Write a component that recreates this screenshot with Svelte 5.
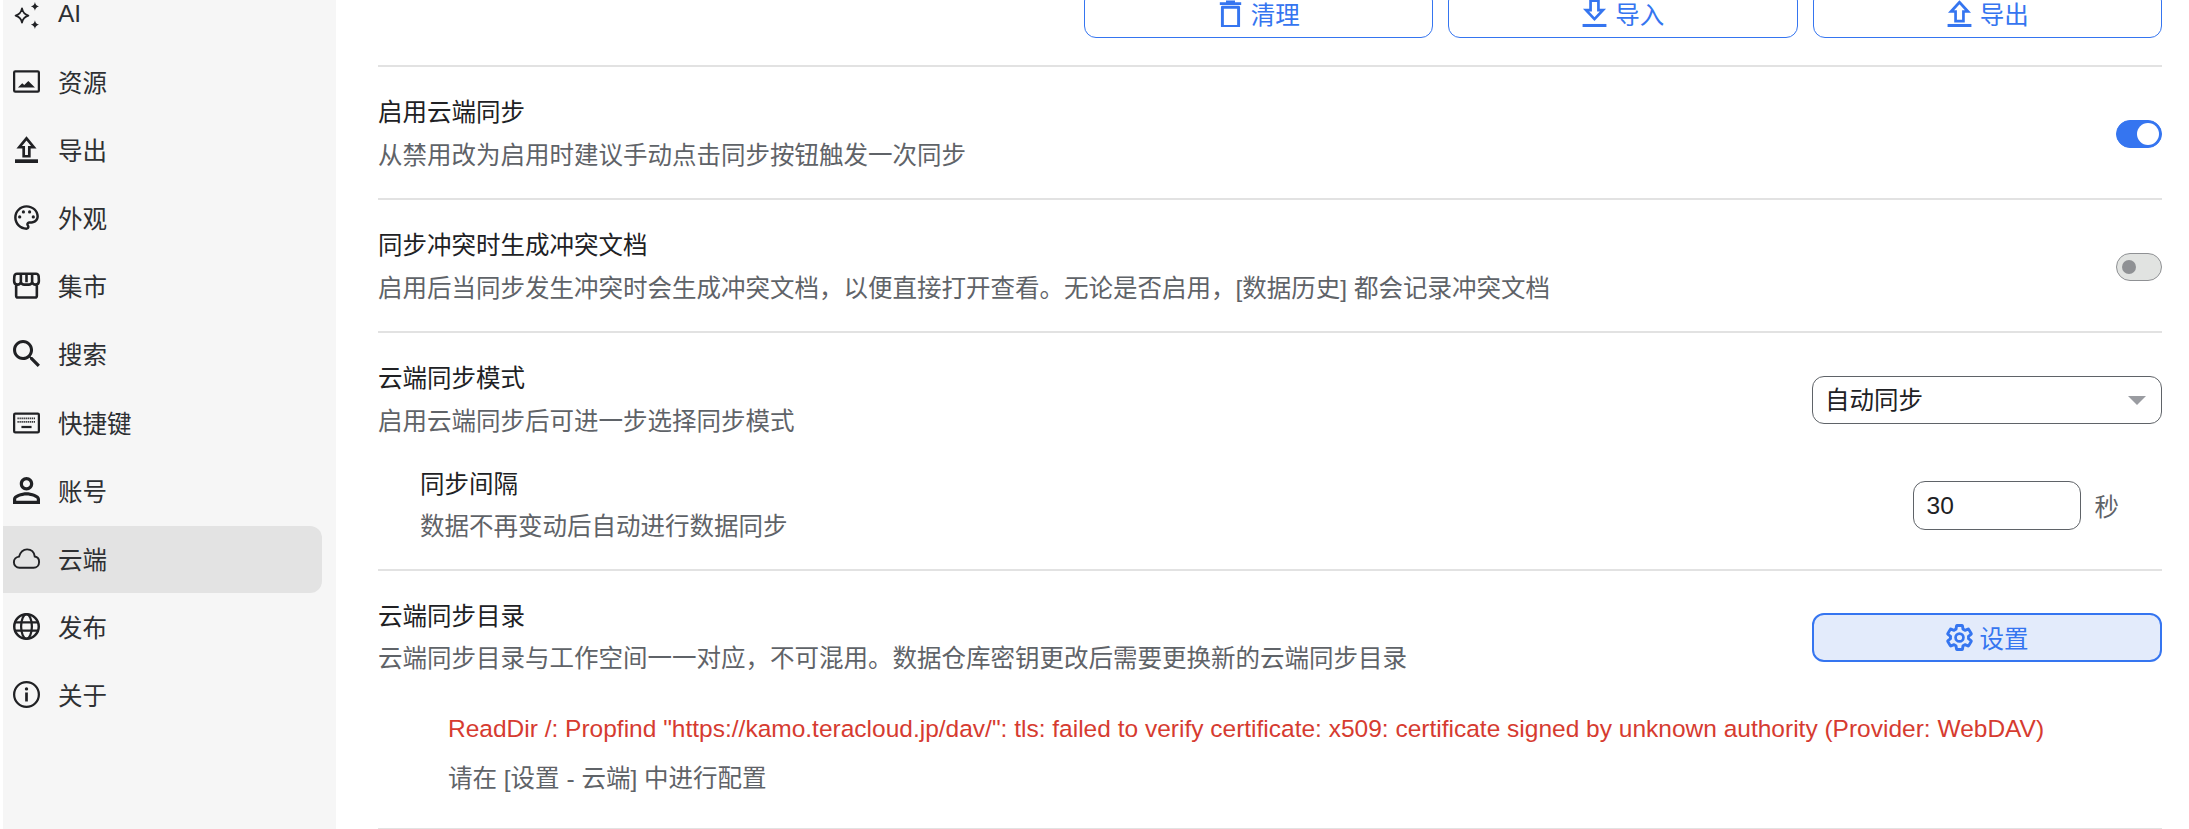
<script lang="ts">
	const nav = [
		{ label: 'AI', icon: '<path fill="none" stroke="currentColor" stroke-width="1.600" stroke-linejoin="round" d="M8 7.500c.7 3.700 2 5.300 5.700 6.300-3.700 1-5 2.600-5.700 6.300-.7-3.700-2-5.300-5.700-6.300 3.700-1 5-2.600 5.700-6.300z"/><path fill="currentColor" d="M19.500 1.800c.5 2.500 1.300 3.300 3.600 3.900-2.300.6-3.100 1.400-3.600 3.900-.5-2.500-1.300-3.300-3.600-3.900 2.300-.6 3.100-1.400 3.600-3.900zM19.500 18c.5 2.500 1.300 3.300 3.600 3.900-2.300.6-3.100 1.400-3.600 3.900-.5-2.500-1.300-3.300-3.600-3.900 2.300-.6 3.100-1.400 3.600-3.900z"/>' },
		{ label: '资源', icon: '<rect x="1" y="3" width="22" height="18" rx="1" fill="none" stroke="currentColor" stroke-width="2"/><path fill="currentColor" d="M4.400 17.300l3.800-3.800 1.800 1.600 3.600-3.600 5.900 5.800z"/>' },
		{ label: '导出', icon: '<path fill="none" stroke="currentColor" stroke-width="2.400" d="M12 2.200L5.600 10h3.900v8h5v-8h3.900z"/><path fill="currentColor" d="M1.800 20.700h20.400V24H1.800z"/>' },
		{ label: '外观', icon: '<g transform="translate(-1.200 -1.200) scale(1.100)"><path fill="currentColor" d="M12 22C6.490 22 2 17.510 2 12S6.490 2 12 2s10 4.040 10 9c0 3.310-2.690 6-6 6h-1.770c-.28 0-.5.220-.5.500 0 .120.050.230.130.330.410.470.640 1.060.640 1.670 0 1.380-1.120 2.500-2.500 2.500zm0-18c-4.410 0-8 3.590-8 8s3.590 8 8 8c.28 0 .5-.22.5-.5 0-.16-.08-.28-.14-.35-.41-.46-.63-1.050-.63-1.650 0-1.380 1.120-2.500 2.500-2.500H16c2.210 0 4-1.790 4-4 0-3.860-3.590-7-8-7z"/><circle fill="currentColor" cx="6.500" cy="11.500" r="1.300"/><circle fill="currentColor" cx="9.500" cy="7.500" r="1.300"/><circle fill="currentColor" cx="14.500" cy="7.500" r="1.300"/><circle fill="currentColor" cx="17.500" cy="11.500" r="1.300"/></g>' },
		{ label: '集市', icon: '<path fill="none" stroke="currentColor" stroke-width="2.300" stroke-linejoin="round" d="M3.500 1.500h17c1.300 0 2.100 1 2.300 2.200l.2 4.300c0 2-1.300 3.200-3 3.200-1.400 0-2.600-.8-3-2.200-.4 1.400-1.600 2.200-3 2.200h-4c-1.400 0-2.600-.8-3-2.200-.4 1.400-1.600 2.200-3 2.200C2.300 11.200 1 10 1 8l.2-4.300C1.400 2.500 2.200 1.500 3.500 1.500zM2.800 11v10c0 1 .6 1.600 1.500 1.600h15.400c.9 0 1.500-.6 1.500-1.600V11M7 2v7M12 2v7M17 2v7"/>' },
		{ label: '搜索', icon: '<path fill="currentColor" d="M15.500 14h-.79l-.28-.27C15.410 12.590 16 11.110 16 9.500 16 5.910 13.090 3 9.500 3S3 5.910 3 9.500 5.910 16 9.500 16c1.610 0 3.090-.59 4.230-1.570l.27.280v.790l5 4.990L20.490 19l-4.990-5zm-6 0C7.010 14 5 11.990 5 9.500S7.010 5 9.500 5 14 7.010 14 9.500 11.990 14 9.500 14z" transform="translate(-4.100 -4.100) scale(1.370)"/>' },
		{ label: '快捷键', icon: '<rect x="1" y="4.200" width="22" height="16.600" rx="1" fill="none" stroke="currentColor" stroke-width="2"/><path stroke="currentColor" stroke-width="1.600" stroke-dasharray="1.100 .7" fill="none" d="M4 8.400h16M4 11.500h16"/><path stroke="currentColor" stroke-width="2" d="M7.500 16h9"/>' },
		{ label: '账号', icon: '<path fill="currentColor" d="M12 5.900c1.160 0 2.100.940 2.100 2.100s-.94 2.100-2.100 2.100S9.900 9.160 9.900 8s.94-2.100 2.100-2.100m0 9c2.970 0 6.100 1.460 6.100 2.100v1.100H5.900V17c0-.64 3.130-2.100 6.100-2.100M12 4C9.790 4 8 5.790 8 8s1.790 4 4 4 4-1.790 4-4-1.790-4-4-4zm0 9c-2.670 0-8 1.340-8 4v3h16v-3c0-2.660-5.330-4-8-4z" transform="translate(-6 -6) scale(1.500)"/>' },
		{ label: '云端', icon: '<path fill="none" stroke="currentColor" stroke-width="1.700" d="M5.800 20.200C2.900 20.200.8 18 .8 15.300c0-2.600 1.900-4.700 4.600-5C6.500 6.500 9 3.900 12.500 3.900c3.800 0 6.300 2.700 6.800 6.300 2.300.3 3.900 2.300 3.900 4.800 0 2.900-2.100 5.200-4.900 5.200z"/>' },
		{ label: '发布', icon: '<circle cx="12" cy="12" r="10.900" fill="none" stroke="currentColor" stroke-width="2.200"/><ellipse cx="12" cy="12" rx="4.800" ry="10.900" fill="none" stroke="currentColor" stroke-width="2"/><path stroke="currentColor" stroke-width="2" d="M1.500 8.300h21M1.500 15.700h21"/>' },
		{ label: '关于', icon: '<circle cx="12" cy="12" r="11" fill="none" stroke="currentColor" stroke-width="2"/><path fill="currentColor" d="M10.800 10.200h2.400v8h-2.400z"/><circle fill="currentColor" cx="12" cy="7" r="1.500"/>' }
	];

	const tools = [
		{ label: '清理', icon: '<path fill="currentColor" d="M8 .5h8v1.500h5.500v2.500h-19V2H8z"/><path fill="none" stroke="currentColor" stroke-width="2.600" stroke-linejoin="round" d="M4.800 6.500h14.400v17H4.800z"/>' },
		{ label: '导入', icon: '<path fill="none" stroke="currentColor" stroke-width="2.400" d="M12 17L4.500 9h4V.5h7V9h4z"/><path fill="currentColor" d="M1.400 21.300h21.200v3.300H1.400z"/>' },
		{ label: '导出', icon: '<path fill="none" stroke="currentColor" stroke-width="2.400" d="M12 2L4.500 10.200h4v8.500h7v-8.500h4z"/><path fill="currentColor" d="M1.400 21.300h21.200v3.300H1.400z"/>' }
	];

	let syncOn = $state(true);
	let conflictOn = $state(false);
	let mode = $state('自动同步');
	let interval = $state(30);
</script>

<div class="page">
	<nav class="sidebar">
		{#each nav as item}
			<div class="nav-item" class:active={item.label === '云端'}>
				<svg class="nav-icon" viewBox="0 0 24 24">{@html item.icon}</svg>
				<span>{item.label}</span>
			</div>
		{/each}
	</nav>

	<main class="content">
		<div class="tools">
			{#each tools as tool}
				<button class="btn">
					<svg class="btn-icon" viewBox="0 0 24 24">{@html tool.icon}</svg>
					{tool.label}
				</button>
			{/each}
		</div>

		<section class="row first">
			<div class="text">
				<div class="title">启用云端同步</div>
				<div class="desc">从禁用改为启用时建议手动点击同步按钮触发一次同步</div>
			</div>
			<label class="switch">
				<input type="checkbox" bind:checked={syncOn} />
				<span class="knob"></span>
			</label>
		</section>

		<section class="row">
			<div class="text">
				<div class="title">同步冲突时生成冲突文档</div>
				<div class="desc">启用后当同步发生冲突时会生成冲突文档，以便直接打开查看。无论是否启用，[数据历史] 都会记录冲突文档</div>
			</div>
			<label class="switch">
				<input type="checkbox" bind:checked={conflictOn} />
				<span class="knob"></span>
			</label>
		</section>

		<section class="row">
			<div class="text">
				<div class="title">云端同步模式</div>
				<div class="desc">启用云端同步后可进一步选择同步模式</div>
			</div>
			<div class="select">
				<select bind:value={mode}>
					<option>自动同步</option>
					<option>手动同步</option>
				</select>
				<span class="caret"></span>
			</div>
		</section>

		<section class="row sub">
			<div class="text">
				<div class="title">同步间隔</div>
				<div class="desc">数据不再变动后自动进行数据同步</div>
			</div>
			<div class="interval">
				<input type="number" bind:value={interval} />
				<span class="unit">秒</span>
			</div>
		</section>

		<section class="row last">
			<div class="head">
				<div class="text">
					<div class="title">云端同步目录</div>
					<div class="desc">云端同步目录与工作空间一一对应，不可混用。数据仓库密钥更改后需要更换新的云端同步目录</div>
				</div>
				<button class="btn filled">
					<svg class="btn-icon" viewBox="0 0 24 24">
						<path fill="none" stroke="currentColor" stroke-width="2.300" stroke-linejoin="round" d="M19.140 12.940c.04-.3.060-.61.060-.94 0-.32-.02-.64-.07-.94l2.030-1.580c.18-.14.230-.41.120-.61l-1.920-3.320c-.12-.22-.37-.29-.59-.22l-2.390.960c-.5-.38-1.030-.7-1.620-.94l-.36-2.540c-.04-.24-.24-.41-.48-.41h-3.840c-.24 0-.43.170-.47.410l-.36 2.540c-.59.240-1.130.570-1.620.940l-2.390-.96c-.22-.08-.47 0-.59.220L2.740 8.870c-.12.210-.08.470.120.610l2.030 1.580c-.05.3-.09.630-.09.940s.02.640.070.940l-2.030 1.580c-.18.140-.23.410-.12.610l1.920 3.320c.12.220.37.290.59.220l2.390-.96c.5.380 1.030.7 1.620.940l.36 2.540c.05.240.24.410.48.410h3.840c.24 0 .44-.17.470-.41l.36-2.540c.59-.24 1.130-.56 1.620-.94l2.390.960c.22.080.47 0 .59-.22l1.920-3.320c.12-.22.070-.47-.12-.61l-2.010-1.580z" transform="translate(-1.400 -1.400) scale(1.117)"/>
						<circle cx="12" cy="12" r="3.500" fill="none" stroke="currentColor" stroke-width="2.400"/>
					</svg>
					设置
				</button>
			</div>
			<div class="status">
				<div class="error">ReadDir /: Propfind "https://kamo.teracloud.jp/dav/": tls: failed to verify certificate: x509: certificate signed by unknown authority (Provider: WebDAV)</div>
				<div class="hint">请在 [设置 - 云端] 中进行配置</div>
			</div>
		</section>
	</main>
</div>

<style>
	:global(html),
	:global(body) {
		margin: 0;
		background: #fff;
		overflow: hidden;
	}

	.page {
		display: flex;
		height: 829px;
		overflow: hidden;
		padding-left: 3px;
		font-family: 'Liberation Sans', 'Noto Sans CJK SC', sans-serif;
		font-size: 24.5px;
		color: #202124;
	}

	.sidebar {
		flex: 0 0 333px;
		box-sizing: border-box;
		background: #f6f6f6;
		padding: 0 14px 0 0;
		display: flex;
		flex-direction: column;
		gap: 1.1px;
		height: 829px;
	}

	.nav-item {
		flex: 0 0 67px;
		box-sizing: border-box;
		display: flex;
		align-items: center;
		gap: 18px;
		padding: 0 0 2px 10px;
		border-radius: 0 12px 12px 0;
		color: #2e3033;
	}
	.nav-item:first-child {
		margin-top: -19px;
	}
	.nav-item.active {
		background: #e3e3e3;
	}

	.nav-icon {
		width: 27px;
		height: 27px;
		color: #202124;
		flex: none;
		overflow: visible;
	}

	.content {
		flex: 1;
		min-width: 0;
		padding: 0 27px 0 42px;
	}

	.tools {
		display: flex;
		justify-content: flex-end;
		gap: 15px;
		margin-top: -11px;
		padding-bottom: 27px;
	}

	.btn {
		width: 349.500px;
		height: 49px;
		box-sizing: border-box;
		display: flex;
		align-items: center;
		justify-content: center;
		gap: 7px;
		background: #fff;
		border: 1.750px solid #3575f0;
		border-radius: 12px;
		color: #3575f0;
		font: inherit;
		padding: 0;
	}
	.btn.filled {
		width: 350px;
		background: #e3ebfb;
		border-width: 2px;
		flex: none;
	}

	.btn-icon {
		width: 27px;
		height: 27px;
		flex: none;
	}

	.row {
		display: flex;
		align-items: center;
		justify-content: space-between;
		gap: 26px;
		padding: 28px 0 24.500px;
		border-top: 2px solid #e2e2e2;
	}
	.row.sub {
		border-top: 0;
		padding: 2.500px 43px 24px 42px;
	}
	.row.last {
		display: block;
		padding: 27.500px 0 31.500px;
		border-top: 2px solid #e2e2e2;
		border-bottom: 2px solid #e2e2e2;
	}

	.head {
		display: flex;
		align-items: center;
		justify-content: space-between;
		gap: 26px;
	}

	.title {
		line-height: 36px;
	}

	.desc {
		margin-top: 6.500px;
		line-height: 36px;
		color: #5f6368;
	}

	.switch {
		position: relative;
		display: block;
		flex: none;
		width: 46px;
		height: 28px;
	}
	.switch input {
		position: absolute;
		opacity: 0;
		margin: 0;
		inset: 0;
	}
	.knob {
		position: absolute;
		inset: 0;
		box-sizing: border-box;
		border-radius: 14px;
		border: 1.500px solid #8f9194;
		background: #e1e3e1;
	}
	.knob::after {
		content: '';
		position: absolute;
		left: 5px;
		top: 5.500px;
		width: 14px;
		height: 14px;
		border-radius: 50%;
		background: #8f9194;
	}
	.switch input:checked + .knob {
		border-color: #3575f0;
		background: #3575f0;
	}
	.switch input:checked + .knob::after {
		left: 19.500px;
		top: 1.500px;
		width: 22px;
		height: 22px;
		background: #fff;
	}

	.select {
		position: relative;
		flex: none;
		width: 350px;
		height: 48px;
	}
	.select select {
		width: 100%;
		height: 100%;
		box-sizing: border-box;
		appearance: none;
		background: #fff;
		border: 1.500px solid #5f6368;
		border-radius: 12px;
		color: #202124;
		font: inherit;
		padding: 0 12px;
	}
	.caret {
		position: absolute;
		right: 16px;
		top: 20px;
		border-left: 9px solid transparent;
		border-right: 9px solid transparent;
		border-top: 9px solid #9a9ca1;
	}

	.interval {
		display: flex;
		align-items: center;
		gap: 14px;
		flex: none;
	}
	.interval input {
		width: 168px;
		height: 49px;
		box-sizing: border-box;
		background: #fff;
		border: 1.500px solid #5f6368;
		border-radius: 12px;
		color: #202124;
		font: inherit;
		padding: 0 13px;
		appearance: textfield;
		outline: none;
	}
	.unit {
		color: #5f6368;
	}

	.status {
		padding: 33.500px 0 0 70px;
	}
	.error {
		line-height: 36px;
		color: #d63b30;
	}
	.hint {
		margin-top: 14px;
		line-height: 36px;
		color: #5f6368;
	}
</style>
